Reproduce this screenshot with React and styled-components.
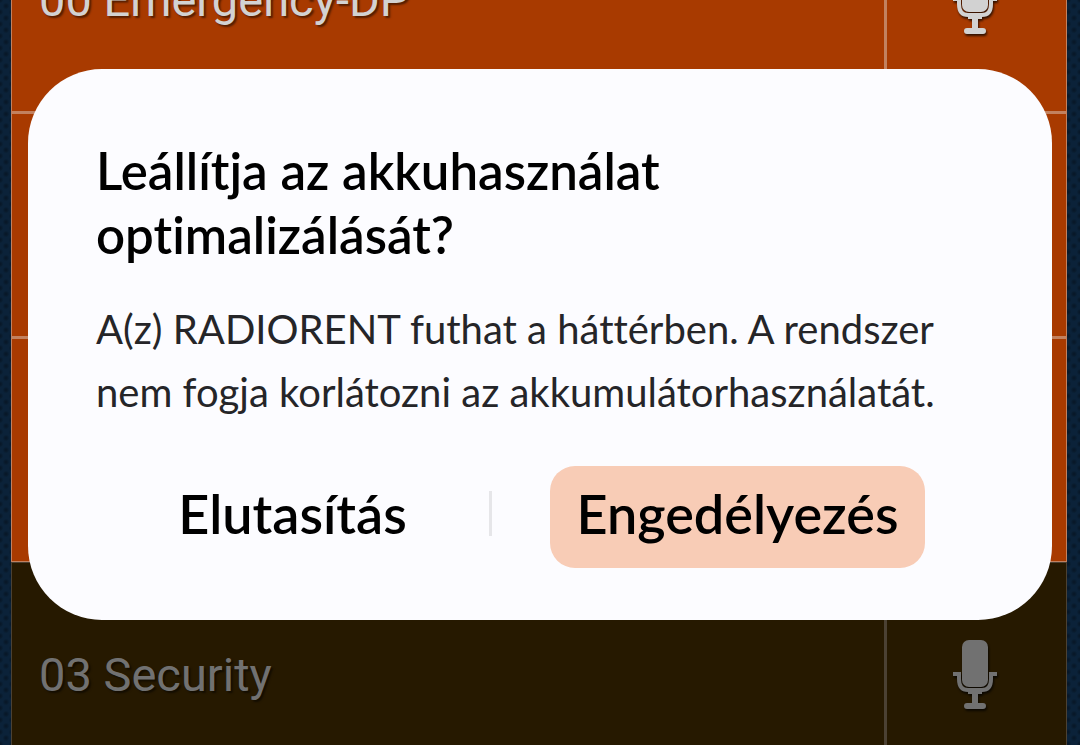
import React from 'react';
import styled, { createGlobalStyle, ThemeProvider } from 'styled-components';

const theme = {
  colors: {
    navy: '#0b2239',
    navyDot: '#081829',
    orange: '#a83a00',
    orangeLine: '#c2815f',
    brown: '#261900',
    brownLine: '#4b4133',
    light: '#d2d2d2',
    dimmed: '#717171',
    surface: '#fcfcff',
    accent: '#f8ccb6',
    divider: '#e6e6e9',
  },
};

const GlobalStyle = createGlobalStyle`
  * {
    box-sizing: border-box;
  }

  body {
    margin: 0;
  }
`;

const StyledScreen = styled.div`
  position: relative;
  height: 100vh;
  overflow: hidden;
  padding: 0 13px 0 11px;
  background-color: ${(props) => props.theme.colors.navy};
  background-image: radial-gradient(${(props) => props.theme.colors.navyDot} 10%, transparent 40%),
    radial-gradient(${(props) => props.theme.colors.navyDot} 10%, transparent 40%);
  background-size: 12px 12px;
  background-position: 0 0, 6px 6px;
`;

/* the list is scrolled half a row down */
const StyledList = styled.ul`
  list-style: none;
  margin: -113px 0 0;
  padding: 0;
`;

const StyledRow = styled.li`
  display: flex;
  height: 225px;
  color: ${(props) => (props.$active ? props.theme.colors.light : props.theme.colors.dimmed)};
  background: ${(props) => (props.$active ? props.theme.colors.orange : props.theme.colors.brown)};
  border: 1px solid
    ${(props) => (props.$active ? props.theme.colors.orangeLine : props.theme.colors.brownLine)};
  border-top-width: ${(props) => (props.$active ? '2px' : '1px')};
`;

const StyledLabel = styled.div`
  display: flex;
  flex: 1;
  align-items: center;
  padding-left: 27px;
  font-family: Roboto, sans-serif;
  font-size: 47px;
  line-height: 56px;
  text-shadow: 2px 2px 2px rgba(0, 0, 0, 0.5);
`;

const StyledTalk = styled.div`
  display: flex;
  align-items: center;
  justify-content: center;
  width: 182px;
  padding-right: 3px;
  border-left: 3px solid;
  border-color: ${(props) =>
    props.$active ? props.theme.colors.orangeLine : props.theme.colors.brownLine};
`;

const StyledMic = styled.svg`
  width: 44px;
  height: 70px;
  overflow: visible;
  filter: drop-shadow(1px 2px 1px rgba(0, 0, 0, 0.7));
`;

const StyledOverlay = styled.div`
  position: absolute;
  inset: 0;
  padding: 69px 28px 0;
`;

const StyledDialog = styled.section`
  padding: 70px 68px 52px;
  border-radius: 74px;
  background: ${(props) => props.theme.colors.surface};
  font-family: Lato, sans-serif;
  font-variant-ligatures: none;
`;

const StyledTitle = styled.h1`
  max-width: 640px;
  margin: 0;
  font-size: 51px;
  font-weight: 600;
  line-height: 64px;
  color: #000;
`;

const StyledText = styled.p`
  margin: 31px 0 42px;
  font-size: 40px;
  line-height: 63px;
  color: #252528;
`;

const StyledActions = styled.div`
  display: flex;
  align-items: center;
  padding: 0 59px 0 9px;
`;

const StyledDivider = styled.span`
  width: 3px;
  height: 45px;
  margin: 0 58px 8px 9px;
  background: ${(props) => props.theme.colors.divider};
`;

const StyledButton = styled.button`
  flex: 1 1 0;
  min-width: 0;
  height: 102px;
  padding: 0 0 8px;
  border: 0;
  border-radius: 25px;
  background: ${(props) => (props.$primary ? props.theme.colors.accent : 'transparent')};
  color: #000;
  font-family: inherit;
  font-size: 54px;
  font-weight: 600;
`;

const Mic = () => (
  <StyledMic viewBox="0 0 44 70" aria-hidden="true">
    <rect x="9" y="0" width="26" height="47" rx="7" fill="currentColor" />
    <path
      d="M0 34H6V39C6 46 9 50 15 50H29C35 50 38 46 38 39V34H44"
      fill="none"
      stroke="currentColor"
      strokeWidth="4"
    />
    <path
      d="M15 50H29V54H25V63H30A3 3 0 0 1 30 69H14A3 3 0 0 1 14 63H19V54H15Z"
      fill="currentColor"
    />
  </StyledMic>
);

const channels = [
  { id: 0, name: '00 Emergency-DP', active: true },
  { id: 1, name: '', active: true },
  { id: 2, name: '', active: true },
  { id: 3, name: '03 Security', active: false },
];

const App = () => (
  <ThemeProvider theme={theme}>
    <GlobalStyle />
    <StyledScreen>
      <StyledList>
        {channels.map(({ id, name, active }) => (
          <StyledRow key={id} $active={active}>
            <StyledLabel>{name}</StyledLabel>
            <StyledTalk $active={active}>
              <Mic />
            </StyledTalk>
          </StyledRow>
        ))}
      </StyledList>
      <StyledOverlay>
        <StyledDialog role="dialog" aria-labelledby="dialog-title">
          <StyledTitle id="dialog-title">Leállítja az akkuhasználat optimalizálását?</StyledTitle>
          <StyledText>
            A(z) RADIORENT futhat a háttérben. A rendszer nem fogja korlátozni az
            akkumulátorhasználatát.
          </StyledText>
          <StyledActions>
            <StyledButton type="button">Elutasítás</StyledButton>
            <StyledDivider />
            <StyledButton type="button" $primary>
              Engedélyezés
            </StyledButton>
          </StyledActions>
        </StyledDialog>
      </StyledOverlay>
    </StyledScreen>
  </ThemeProvider>
);

export default App;
